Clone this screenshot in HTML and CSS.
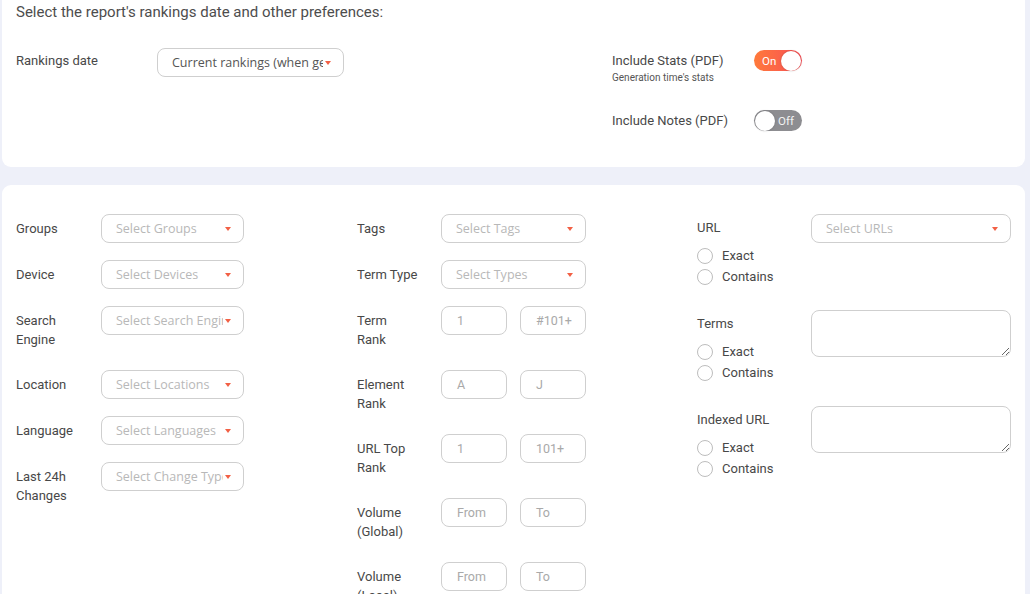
FILE: index.html
```html
<!DOCTYPE html>
<html lang="en">
<head>
<meta charset="utf-8">
<title>Report preferences</title>
<link rel="stylesheet" href="styles.css">
</head>
<body>
<div class="page">
  <section class="card card-top">
    <h2 class="heading">Select the report's rankings date and other preferences:</h2>
    <div class="prefs">
      <div class="date-row">
        <div class="date-label">Rankings date</div>
        <div class="select select-date">
          <span class="select-text value">Current rankings (when generated)</span>
          <span class="caret"></span>
        </div>
      </div>
      <div class="toggles">
        <div class="pref-row">
          <div class="pref-text">
            <div class="pref-label">Include Stats (PDF)</div>
            <div class="pref-sub">Generation time's stats</div>
          </div>
          <div class="toggle on"><span class="toggle-txt">On</span><span class="knob"></span></div>
        </div>
        <div class="pref-row pref-row-2">
          <div class="pref-text">
            <div class="pref-label">Include Notes (PDF)</div>
          </div>
          <div class="toggle off"><span class="knob"></span><span class="toggle-txt">Off</span></div>
        </div>
      </div>
    </div>
  </section>

  <section class="card card-filters">
    <div class="cols">
      <div class="col">
        <div class="frow"><div class="flabel">Groups</div><div class="select"><span class="select-text">Select Groups</span><span class="caret"></span></div></div>
        <div class="frow"><div class="flabel">Device</div><div class="select"><span class="select-text">Select Devices</span><span class="caret"></span></div></div>
        <div class="frow"><div class="flabel">Search<br>Engine</div><div class="select"><span class="select-text">Select Search Engines</span><span class="caret"></span></div></div>
        <div class="frow"><div class="flabel">Location</div><div class="select"><span class="select-text">Select Locations</span><span class="caret"></span></div></div>
        <div class="frow"><div class="flabel">Language</div><div class="select"><span class="select-text">Select Languages</span><span class="caret"></span></div></div>
        <div class="frow"><div class="flabel">Last 24h<br>Changes</div><div class="select"><span class="select-text">Select Change Types</span><span class="caret"></span></div></div>
      </div>

      <div class="col">
        <div class="frow"><div class="flabel">Tags</div><div class="select"><span class="select-text">Select Tags</span><span class="caret"></span></div></div>
        <div class="frow"><div class="flabel">Term Type</div><div class="select"><span class="select-text">Select Types</span><span class="caret"></span></div></div>
        <div class="frow"><div class="flabel">Term<br>Rank</div><div class="pair"><div class="inp">1</div><div class="inp">#101+</div></div></div>
        <div class="frow"><div class="flabel">Element<br>Rank</div><div class="pair"><div class="inp">A</div><div class="inp">J</div></div></div>
        <div class="frow"><div class="flabel">URL Top<br>Rank</div><div class="pair"><div class="inp">1</div><div class="inp">101+</div></div></div>
        <div class="frow"><div class="flabel">Volume<br>(Global)</div><div class="pair"><div class="inp">From</div><div class="inp">To</div></div></div>
        <div class="frow"><div class="flabel">Volume<br>(Local)</div><div class="pair"><div class="inp">From</div><div class="inp">To</div></div></div>
      </div>

      <div class="col col-3">
        <div class="mblock">
          <div class="mleft">
            <div class="mlabel">URL</div>
            <label class="radio"><span class="circle"></span>Exact</label>
            <label class="radio"><span class="circle"></span>Contains</label>
          </div>
          <div class="select select-wide"><span class="select-text">Select URLs</span><span class="caret"></span></div>
        </div>
        <div class="mblock">
          <div class="mleft">
            <div class="mlabel">Terms</div>
            <label class="radio"><span class="circle"></span>Exact</label>
            <label class="radio"><span class="circle"></span>Contains</label>
          </div>
          <textarea class="area"></textarea>
        </div>
        <div class="mblock">
          <div class="mleft">
            <div class="mlabel">Indexed URL</div>
            <label class="radio"><span class="circle"></span>Exact</label>
            <label class="radio"><span class="circle"></span>Contains</label>
          </div>
          <textarea class="area"></textarea>
        </div>
      </div>
    </div>
  </section>
</div>
</body>
</html>
```

FILE: styles.css
```css
* { box-sizing: border-box; }

html, body {
  margin: 0;
  padding: 0;
  background: #eef0f9;
  font-family: Roboto, "Liberation Sans", Arial, sans-serif;
  color: #484848;
  overflow: hidden;
}

.page {
  padding: 0 5px 0 2px;
}

.card {
  background: #fff;
  border-radius: 9px;
}

.card-top {
  border-radius: 0 0 9px 9px;
  height: 167px;
  padding: 2px 14px 0 14px;
}

.heading {
  margin: 0;
  font-size: 15px;
  font-weight: 400;
  line-height: 20px;
  color: #4d4d4d;
}

.prefs {
  display: grid;
  grid-template-columns: 596px auto;
  margin-top: 26px;
}

.date-row {
  display: flex;
  align-items: flex-start;
}

.date-label {
  width: 141px;
  font-size: 13px;
  line-height: 20px;
  padding-top: 3px;
}

.select {
  display: flex;
  align-items: center;
  height: 29px;
  width: 143px;
  border: 1px solid #cfcfcf;
  border-radius: 8px;
  padding: 0 12px 0 14px;
  background: #fff;
  font-family: "Open Sans", "Noto Sans", sans-serif;
  font-size: 12.5px;
  color: #b8b8b8;
}

.select-date {
  width: 187px;
}

.select-wide {
  width: 200px;
}

.select-text {
  flex: 1;
  min-width: 0;
  overflow: hidden;
  white-space: nowrap;
}

.select-text.value {
  color: #555;
}

.caret {
  flex: none;
  width: 0;
  height: 0;
  margin-left: 2px;
  border-left: 3.5px solid transparent;
  border-right: 3.5px solid transparent;
  border-top: 4px solid #f26045;
}

.toggles {
  display: flex;
  flex-direction: column;
  margin-top: 2px;
}

.pref-row {
  display: flex;
  align-items: flex-start;
}

.pref-row-2 {
  margin-top: 25px;
}

.pref-text {
  width: 142px;
}

.pref-label {
  font-size: 13px;
  line-height: 20px;
  padding-top: 1px;
}

.pref-sub {
  font-size: 10px;
  line-height: 14px;
  color: #555;
}

.toggle {
  display: flex;
  align-items: center;
  justify-content: space-between;
  width: 48px;
  height: 21px;
  border-radius: 11px;
  padding: 0 1px;
  font-size: 11.5px;
  color: #fff;
}

.toggle.on {
  background: linear-gradient(90deg, #ff7a3a, #f84f57);
  padding-left: 8px;
}

.toggle.off {
  background: #8d8d91;
  padding-right: 8px;
  color: #f2f2f2;
}

.knob {
  width: 20px;
  height: 20px;
  border-radius: 50%;
  background: #fff;
  box-shadow: 0 0 2px rgba(0, 0, 0, 0.25);
}

.card-filters {
  margin-top: 18px;
  height: 440px;
  padding: 29px 14px 0 14px;
}

.cols {
  display: grid;
  grid-template-columns: 341px 340px 1fr;
}

.frow {
  display: flex;
  align-items: flex-start;
  margin-bottom: 17px;
}

.frow .flabel {
  width: 85px;
  flex: none;
  font-size: 13px;
  line-height: 19px;
  padding: 5px 4px 4px 0;
}

.col:nth-child(2) .flabel {
  width: 84px;
}

.col:nth-child(2) .select {
  width: 145px;
}

.pair {
  display: flex;
  gap: 13px;
}

.inp {
  width: 66px;
  height: 29px;
  border: 1px solid #cfcfcf;
  border-radius: 8px;
  padding: 0 0 0 15px;
  font-size: 12.5px;
  line-height: 27px;
  color: #a9a9a9;
}

.mblock {
  display: flex;
  align-items: flex-start;
  margin-bottom: 23px;
}

.mleft {
  width: 114px;
  flex: none;
}

.mlabel {
  font-size: 13px;
  line-height: 28px;
  margin-bottom: 3px;
}

.radio {
  display: flex;
  align-items: center;
  height: 21px;
  font-size: 13px;
}

.circle {
  width: 16px;
  height: 16px;
  border: 1px solid #bdbdbd;
  border-radius: 50%;
  margin-right: 9px;
  background: #fff;
}

.area {
  display: block;
  width: 200px;
  height: 47px;
  margin: 0;
  border: 1px solid #cfcfcf;
  border-radius: 8px;
  background: #fff;
  font-family: inherit;
  resize: vertical;
}
```
